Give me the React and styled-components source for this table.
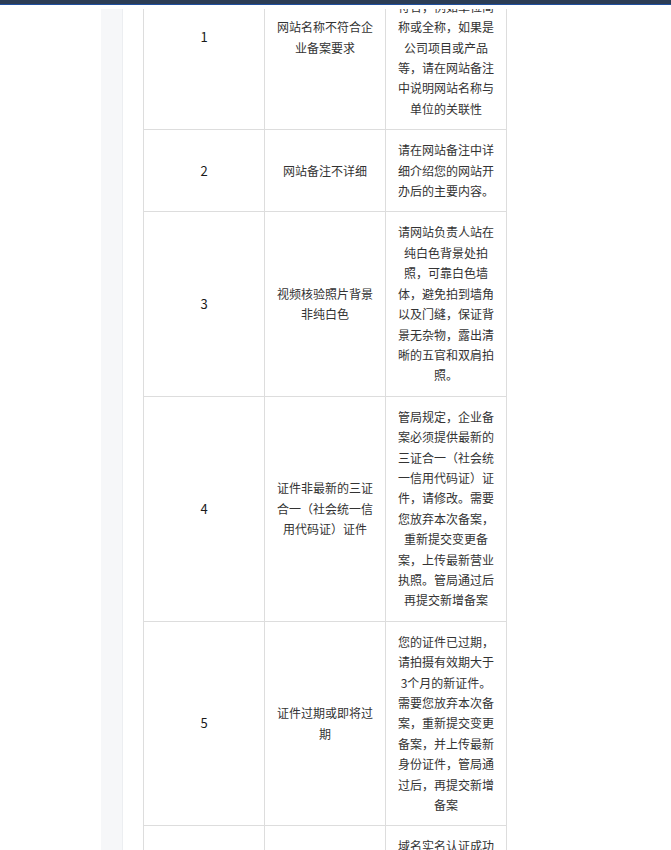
import React from "react";
import styled, { createGlobalStyle } from "styled-components";

const GlobalStyle = createGlobalStyle`
  html, body {
    margin: 0;
    padding: 0;
    background: #ffffff;
  }
  body {
    font-family: "Noto Sans CJK SC", "Noto Sans", sans-serif;
    overflow: hidden;
  }
`;

const Page = styled.div`
  display: flex;
  flex-direction: column;
  width: 671px;
  height: 850px;
  overflow: hidden;
`;

const TopBar = styled.div`
  flex: none;
  height: 4px;
  background: #2c3d55;
  border-bottom: 1px solid #1f4f9e;
`;

const HeaderGap = styled.div`
  flex: none;
  height: 4px;
  background: #ffffff;
`;

const Body = styled.div`
  flex: 1;
  display: flex;
  gap: 20px;
  padding-left: 101px;
  overflow: hidden;
`;

const SideStrip = styled.div`
  flex: none;
  width: 21px;
  background: #f6f7f9;
  border-right: 1px solid #eceef1;
`;

const TableWrap = styled.div`
  flex: none;
  margin-top: -64px;
`;

const Table = styled.table`
  width: 364px;
  table-layout: fixed;
  border-collapse: collapse;
`;

const Cell = styled.td`
  border: 1px solid #dddddd;
  padding: 10px 10px;
  text-align: center;
  vertical-align: middle;
  font-size: ${(p) => (p.$index ? "13px" : "12px")};
  line-height: 20.4px;
  color: ${(p) => (p.$index ? "#1a1a1a" : "#333333")};
  word-break: break-all;
`;

const rows = [
  {
    n: "1",
    issue: "网站名称不符合企业备案要求",
    fix: "网站名称需要与备案主体单位名称相符合，例如单位简称或全称，如果是公司项目或产品等，请在网站备注中说明网站名称与单位的关联性",
  },
  {
    n: "2",
    issue: "网站备注不详细",
    fix: "请在网站备注中详细介绍您的网站开办后的主要内容。",
  },
  {
    n: "3",
    issue: "视频核验照片背景非纯白色",
    fix: "请网站负责人站在纯白色背景处拍照，可靠白色墙体，避免拍到墙角以及门缝，保证背景无杂物，露出清晰的五官和双肩拍照。",
  },
  {
    n: "4",
    issue: "证件非最新的三证合一（社会统一信用代码证）证件",
    fix: "管局规定，企业备案必须提供最新的三证合一（社会统一信用代码证）证件，请修改。需要您放弃本次备案，重新提交变更备案，上传最新营业执照。管局通过后再提交新增备案",
  },
  {
    n: "5",
    issue: "证件过期或即将过期",
    fix: "您的证件已过期，请拍摄有效期大于3个月的新证件。需要您放弃本次备案，重新提交变更备案，并上传最新身份证件，管局通过后，再提交新增备案",
  },
  {
    n: "6",
    issue: "域名未完成实名认证",
    fix: "域名实名认证成功后，需要等待信息同步至管局系统，一般需要三至五个工作日，请您耐心等待同步完成后，再重新提交备案申请，以免再次被管局退回。",
  },
];

export default function App() {
  return (
    <>
      <GlobalStyle />
      <Page>
        <TopBar />
        <HeaderGap />
        <Body>
          <SideStrip />
          <TableWrap>
            <Table>
              <tbody>
                {rows.map((r) => (
                  <tr key={r.n}>
                    <Cell $index>{r.n}</Cell>
                    <Cell>{r.issue}</Cell>
                    <Cell>{r.fix}</Cell>
                  </tr>
                ))}
              </tbody>
            </Table>
          </TableWrap>
        </Body>
      </Page>
    </>
  );
}
